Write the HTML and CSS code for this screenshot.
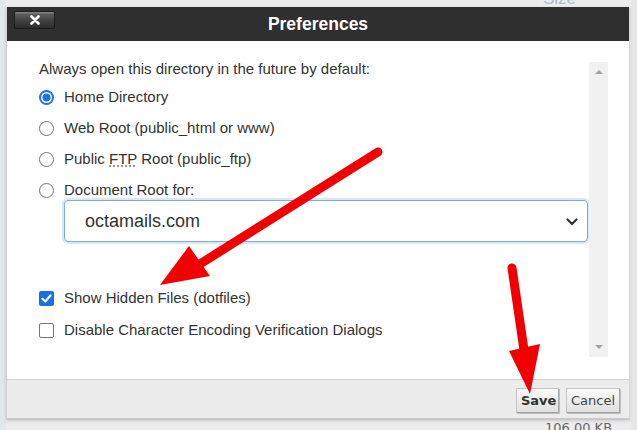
FILE: index.html
```html
<!DOCTYPE html>
<html>
<head>
<meta charset="utf-8">
<link rel="stylesheet" href="styles.css">
</head>
<body>
<div class="page">
  <div class="page-head"><span class="col-size">Size</span></div>
  <div class="page-foot"><span class="file-size">106.00 KB</span></div>
</div>

<div class="modal">
  <div class="modal-title">
    <button class="close-btn" type="button" aria-label="Close"><svg width="10" height="10" viewBox="0 0 10 10"><path d="M1.5 1.5 L8.5 8.5 M8.5 1.5 L1.5 8.5" stroke="#fff" stroke-width="2.6" stroke-linecap="round"/></svg></button>
    <h1 class="title-text">Preferences</h1>
  </div>
  <div class="modal-body">
    <div class="content">
      <p class="lead">Always open this directory in the future by default:</p>
      <div class="options">
        <label class="opt"><span class="radio checked"></span><span>Home Directory</span></label>
        <label class="opt"><span class="radio"></span><span>Web Root (public_html or www)</span></label>
        <label class="opt"><span class="radio"></span><span>Public <abbr class="abbr">FTP</abbr> Root (public_ftp)</span></label>
        <label class="opt"><span class="radio"></span><span>Document Root for:</span></label>
      </div>
      <div class="select-wrap">
        <div class="select">
          <span>octamails.com</span>
          <svg class="chev" width="12" height="8" viewBox="0 0 12 8"><path d="M1.5 1.5 L6 6 L10.5 1.5" fill="none" stroke="#333" stroke-width="2.2" stroke-linecap="round" stroke-linejoin="round"/></svg>
        </div>
      </div>
      <div class="checks">
        <label class="opt"><span class="check checked"><svg width="15" height="15" viewBox="0 0 15 15"><path d="M3.5 7.8 L6.2 10.5 L11.5 4.5" fill="none" stroke="#fff" stroke-width="2.2" stroke-linecap="round" stroke-linejoin="round"/></svg></span><span>Show Hidden Files (dotfiles)</span></label>
        <label class="opt"><span class="check"></span><span>Disable Character Encoding Verification Dialogs</span></label>
      </div>
    </div>
    <div class="scrollbar">
      <span class="arrow-up"></span>
      <span class="arrow-down"></span>
    </div>
  </div>
  <div class="modal-foot">
    <button class="btn btn-save" type="button">Save</button>
    <button class="btn" type="button">Cancel</button>
  </div>
</div>

<svg class="annot" width="637" height="430" viewBox="0 0 637 430">
  <line x1="378" y1="152" x2="200" y2="264" stroke="#f00000" stroke-width="9" stroke-linecap="round"/>
  <polygon points="160,285 189,246 210,276" fill="#f00000"/>
  <line x1="512" y1="268" x2="524" y2="350" stroke="#f00000" stroke-width="9" stroke-linecap="round"/>
  <polygon points="509,351 540,344 530,394" fill="#f00000"/>
</svg>
</body>
</html>
```

FILE: styles.css
```css
* { box-sizing: border-box; }
html, body { margin: 0; padding: 0; }
body {
  width: 637px;
  height: 430px;
  overflow: hidden;
  position: relative;
  background: #ececec;
  font-family: "Liberation Sans", Arial, sans-serif;
  color: #333;
}

.page {
  height: 430px;
  display: flex;
  flex-direction: column;
  justify-content: space-between;
  background: linear-gradient(to right, #e2e7ea 0, #e2e7ea 6px, #ededed 6px, #ededed 631px, #e6e6e6 631px);
}
.page-head {
  height: 7px;
  overflow: hidden;
  padding-left: 543px;
}
.col-size {
  display: block;
  margin-top: -10px;
  font-size: 17px;
  line-height: 18px;
  color: #a9bccb;
}
.page-foot {
  height: 10px;
  overflow: hidden;
  padding-left: 545px;
}
.file-size {
  display: block;
  font-family: "DejaVu Sans", Verdana, sans-serif;
  font-size: 13px;
  line-height: 16px;
  color: #666;
}

.modal {
  position: absolute;
  left: 6px;
  top: 7px;
  width: 624px;
  border-left: 1px solid #cfcfcf;
  border-right: 1px solid #d6d6d6;
  border-bottom: 2px solid #c9c9c9;
  background: #fff;
  box-shadow: 0 1px 3px rgba(0,0,0,0.15);
}

.modal-title {
  height: 34px;
  background: #2f2f2f;
  display: flex;
  align-items: center;
  justify-content: center;
  position: relative;
}
.title-text {
  margin: 0;
  font-size: 17.5px;
  font-weight: bold;
  color: #fff;
  line-height: 20px;
}
.close-btn {
  position: absolute;
  left: 7px;
  top: 4px;
  width: 41px;
  height: 18px;
  padding: 0;
  border: 1px solid #1c1c1c;
  border-radius: 2px;
  background: linear-gradient(to bottom, #8a8a8a 0, #5c5c5c 15%, #3e3e3e 60%, #2b2b2b 100%);
  display: flex;
  align-items: center;
  justify-content: center;
}
.close-btn svg { display: block; }

.modal-body {
  height: 338px;
  display: flex;
  padding: 20px 21px 0 32px;
}
.content {
  flex: 1;
  min-width: 0;
  font-size: 15px;
}
.lead {
  margin: 0;
  line-height: 16px;
  height: 16px;
}
.options {
  margin-top: 10px;
  display: flex;
  flex-direction: column;
  gap: 11px;
}
.opt {
  display: flex;
  align-items: center;
  height: 20px;
  line-height: 20px;
  white-space: nowrap;
}
.abbr {
  text-decoration: underline dotted #777;
  text-underline-offset: 2px;
}
.radio {
  width: 15px;
  height: 15px;
  border-radius: 50%;
  border: 1.5px solid #767676;
  margin-right: 10px;
  flex: none;
  background: #fff;
}
.radio.checked {
  border: 2px solid #1a73e8;
  background: radial-gradient(circle, #1a73e8 0, #1a73e8 3.6px, #fff 4.4px);
}
.check {
  width: 15px;
  height: 15px;
  border-radius: 2px;
  border: 1.5px solid #767676;
  margin-right: 10px;
  flex: none;
  background: #fff;
  display: flex;
}
.check.checked {
  border: none;
  background: #1a6fe3;
}

.select-wrap {
  padding-left: 25px;
}
.select {
  height: 42px;
  border: 1px solid #84aace;
  border-radius: 4px;
  box-shadow: 0 0 0 2px rgba(180, 215, 245, 0.55);
  display: flex;
  align-items: center;
  justify-content: space-between;
  padding: 0 9px 0 20px;
  font-size: 18px;
  color: #333;
}
.chev { display: block; margin-top: 1px; }

.checks {
  margin-top: 46px;
  display: flex;
  flex-direction: column;
  gap: 12px;
}

.scrollbar {
  width: 19px;
  height: 295px;
  margin-top: 1px;
  margin-left: 1px;
  background: #f1f1f1;
  flex: none;
  display: flex;
  flex-direction: column;
  justify-content: space-between;
  align-items: center;
  padding: 8px 0 8px;
}
.arrow-up, .arrow-down {
  width: 0;
  height: 0;
  border-left: 4px solid transparent;
  border-right: 4px solid transparent;
}
.arrow-up { border-bottom: 4px solid #a3a3a3; }
.arrow-down { border-top: 4px solid #a3a3a3; }

.modal-foot {
  height: 39px;
  border-top: 1px solid #d2d2d2;
  background: #ececec;
  display: flex;
  justify-content: flex-end;
  align-items: flex-start;
  gap: 7px;
  padding: 8px 9px 0 0;
}
.btn {
  height: 25px;
  padding: 0 4px;
  font-family: "DejaVu Sans", Verdana, sans-serif;
  font-size: 13px;
  color: #444;
  background: linear-gradient(to bottom, #fafafa 0, #ededed 50%, #e0e0e0 100%);
  border: 1px solid #c4c4c4;
  border-right-color: #a8a8a8;
  border-bottom-color: #a0a0a0;
  border-radius: 1px;
  box-shadow: 1px 1px 0 #bdbdbd;
}
.btn-save {
  font-weight: bold;
  color: #333;
  width: 43px;
}

.annot {
  position: absolute;
  left: 0;
  top: 0;
  pointer-events: none;
}
```
